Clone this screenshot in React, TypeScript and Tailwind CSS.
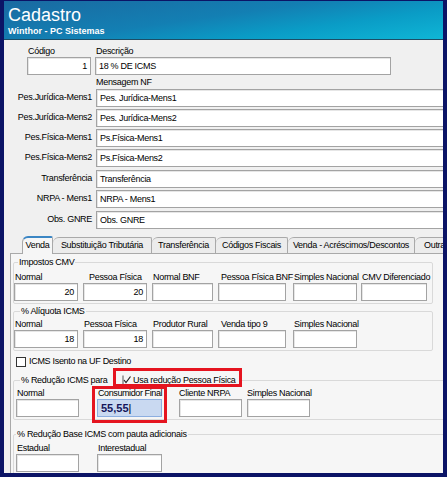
import React from "react";

const inputBase =
  "h-[18px] bg-white border border-[#a3a3a3] shadow-[inset_1px_1px_0_#e6e6e6] px-[3px] leading-[16px] text-black";

type FieldProps = {
  label: string;
  col: string;
  input: string;
  labelPad?: string;
  value?: string;
};

const Field = ({ label, col, input, labelPad = "pl-px", value }: FieldProps) => {
  return (
    <div className={`${col} flex flex-col shrink-0`}>
      <div className={`h-[12px] leading-[12px] whitespace-nowrap ${labelPad}`}>{label}</div>
      <div className={`${inputBase} ${input} text-right`}>{value}</div>
    </div>
  );
};

const msgRows = [
  { label: "Pes.Jurídica-Mens1", value: "Pes. Jurídica-Mens1", mt: "mt-0" },
  { label: "Pes.Jurídica-Mens2", value: "Pes. Jurídica-Mens2", mt: "mt-[2px]" },
  { label: "Pes.Física-Mens1", value: "Ps.Física-Mens1", mt: "mt-[2px]" },
  { label: "Pes.Física-Mens2", value: "Ps.Física-Mens2", mt: "mt-[2px]" },
  { label: "Transferência", value: "Transferência", mt: "mt-[3px]" },
  { label: "NRPA - Mens1", value: "NRPA - Mens1", mt: "mt-[2px]" },
  { label: "Obs. GNRE", value: "Obs. GNRE", mt: "mt-[3px]" },
];

const tabs = [
  { title: "Substituição Tributária", w: "w-[99px]" },
  { title: "Transferência", w: "w-[64px]" },
  { title: "Códigos Fiscais", w: "w-[72px]" },
  { title: "Venda - Acréscimos/Descontos", w: "w-[127px]" },
  { title: "Outra", w: "w-[40px]" },
];

const App = () => {
  return (
    <div className="w-[447px] h-[477px] overflow-hidden bg-[#0b1466] pt-px px-[4px] pb-[4px] flex flex-col font-['Liberation_Sans',Arial,sans-serif] text-[9px] text-black">
      {/* barra de titulo */}
      <div className="h-[38px] shrink-0 pl-[4px] pt-[4px] text-white bg-[linear-gradient(172deg,#1a6aa1_0%,#137fb3_45%,#0a9cc6_70%,#0fb6d6_100%)]">
        <div className="text-[18px] leading-[21px]">Cadastro</div>
        <div className="text-[9px] font-bold leading-[11px]">Winthor - PC Sistemas</div>
      </div>
      <div className="h-px shrink-0 bg-[#1d4d66]" />

      <div className="relative flex-1 bg-[#f0f0f0] overflow-hidden flex flex-col tracking-[-0.3px]">
        {/* codigo / descricao */}
        <div className="flex pt-[5px] ml-[23px]">
          <div className="w-[64px] flex flex-col">
            <div className="h-[12px] leading-[12px] pl-[1px]">Código</div>
            <div className={`${inputBase} text-right`}>1</div>
          </div>
          <div className="w-[296px] ml-[4px] flex flex-col">
            <div className="h-[12px] leading-[12px] pl-[1px]">Descrição</div>
            <div className={inputBase}>18 % DE ICMS</div>
          </div>
        </div>
        <div className="h-[14px] leading-[14px] pl-[92px]">Mensagem NF</div>

        {msgRows.map((r) => (
          <div key={r.label} className={`flex items-center h-[18px] ${r.mt}`}>
            <div className="w-[92px] shrink-0 pr-[4px] text-right whitespace-nowrap">{r.label}</div>
            <div className={`${inputBase} w-[360px] shrink-0`}>{r.value}</div>
          </div>
        ))}

        {/* abas */}
        <div className="flex items-end h-[18px] mt-[6px] ml-[18px] shrink-0">
          <div className="w-[31px] h-[18px] shrink-0 bg-[#f6f6f6] border-x border-[#a9a9a9] border-t-[2px] border-t-[#3b86c4] rounded-tl-[6px] rounded-tr-[2px] -mb-px relative z-10 text-center leading-[15px]">
            Venda
          </div>
          {tabs.map((t) => (
            <div
              key={t.title}
              className={`${t.w} h-[16px] shrink-0 border-t border-r border-[#a9a9a9] rounded-tl-[6px] rounded-tr-[2px] bg-[#ececec] text-center leading-[15px] whitespace-nowrap`}
            >
              {t.title}
            </div>
          ))}
        </div>

        {/* painel da aba */}
        <div className="flex-1 ml-[6px] border-l border-t border-[#a9a9a9] bg-[#f6f6f6] flex flex-col">
          <fieldset className="ml-[2px] mt-[2px] w-[420px] border border-[#d9d9d9] rounded-[2px] pt-[3px] pb-[2px]">
            <legend className="ml-[4px] px-px leading-[12px]">Impostos CMV</legend>
            <div className="flex">
              <Field label="Normal" col="w-[69px]" input="w-[64px]" value="20" />
              <Field label="Pessoa Física" col="w-[69px]" input="w-[64px]" labelPad="pl-[6px]" value="20" />
              <Field label="Normal BNF" col="w-[66px]" input="w-[61px]" />
              <Field label="Pessoa Física BNF" col="w-[75px]" input="w-[68px]" labelPad="pl-[3px]" />
              <Field label="Simples Nacional" col="w-[68px]" input="w-[64px]" />
              <Field label="CMV Diferenciado" col="w-[66px]" input="w-[66px]" />
            </div>
          </fieldset>

          <fieldset className="ml-[2px] mt-px w-[420px] border border-[#d9d9d9] rounded-[2px] pt-px pb-[2px]">
            <legend className="ml-[6px] px-px leading-[12px]">% Alíquota ICMS</legend>
            <div className="flex">
              <Field label="Normal" col="w-[69px]" input="w-[64px]" value="18" />
              <Field label="Pessoa Física" col="w-[69px]" input="w-[64px]" value="18" />
              <Field label="Produtor Rural" col="w-[66px]" input="w-[61px]" />
              <Field label="Venda tipo 9" col="w-[75px]" input="w-[68px]" labelPad="pl-[3px]" />
              <Field label="Simples Nacional" col="w-[68px]" input="w-[64px]" />
            </div>
          </fieldset>

          <div className="flex items-center h-[11px] mt-[5px] ml-[5px]">
            <div className="w-[10px] h-[10px] bg-white border border-[#333]" />
            <span className="ml-[3px] leading-[11px]">ICMS Isento na UF Destino</span>
          </div>

          <fieldset className="ml-[2px] mt-[7px] w-[440px] border border-[#d9d9d9] rounded-[2px] pt-px pb-[2px]">
            <legend className="ml-[6px] leading-[12px] flex items-center">
              <span className="w-[102px] pl-px">% Redução ICMS para</span>
              <span className="flex items-center">
                <svg width="10" height="10" viewBox="0 0 10 10" className="shrink-0">
                  <path d="M1 0.5V9.5H9.5" fill="none" stroke="#555" strokeWidth="1" />
                  <path d="M2 5L4 7.5L8.5 1.5" fill="none" stroke="#222" strokeWidth="1.2" />
                </svg>
                <span className="ml-[1px] pr-[6px]">Usa redução Pessoa Física</span>
              </span>
            </legend>
            <div className="flex ml-[2px]">
              <Field label="Normal" col="w-[81px]" input="w-[63px]" />
              <div className="w-[82px] flex flex-col shrink-0">
                <div className="h-[12px] leading-[12px] pl-px whitespace-nowrap tracking-[-0.4px]">Consumidor Final</div>
                <div className="h-[18px] w-[65px] bg-[#c9d9f1] border border-[#8caee0] px-[3px] leading-[16px] text-[11px] font-bold tracking-normal text-[#14145a]">
                  55,55<span className="font-normal text-black">|</span>
                </div>
              </div>
              <Field label="Cliente NRPA" col="w-[68px]" input="w-[63px]" labelPad="pl-0" />
              <Field label="Simples Nacional" col="w-[70px]" input="w-[63px]" labelPad="pl-0" />
            </div>
          </fieldset>

          <fieldset className="ml-[2px] mt-[8px] w-[440px] border border-[#d9d9d9] rounded-[2px] pt-[2px] pb-[2px]">
            <legend className="ml-[2px] px-px leading-[12px]">% Redução Base ICMS com pauta adicionais</legend>
            <div className="flex ml-[2px]">
              <Field label="Estadual" col="w-[81px]" input="w-[63px]" />
              <Field label="Interestadual" col="w-[82px]" input="w-[65px]" />
            </div>
          </fieldset>
        </div>

        {/* marcacoes em vermelho */}
        <div className="absolute left-[109px] top-[328px] w-[129px] h-[19px] border-[3px] border-[#e5141f]" />
        <div className="absolute left-[88px] top-[346px] w-[75px] h-[37px] border-[3px] border-[#e5141f]" />
      </div>
    </div>
  );
};

export default App;
